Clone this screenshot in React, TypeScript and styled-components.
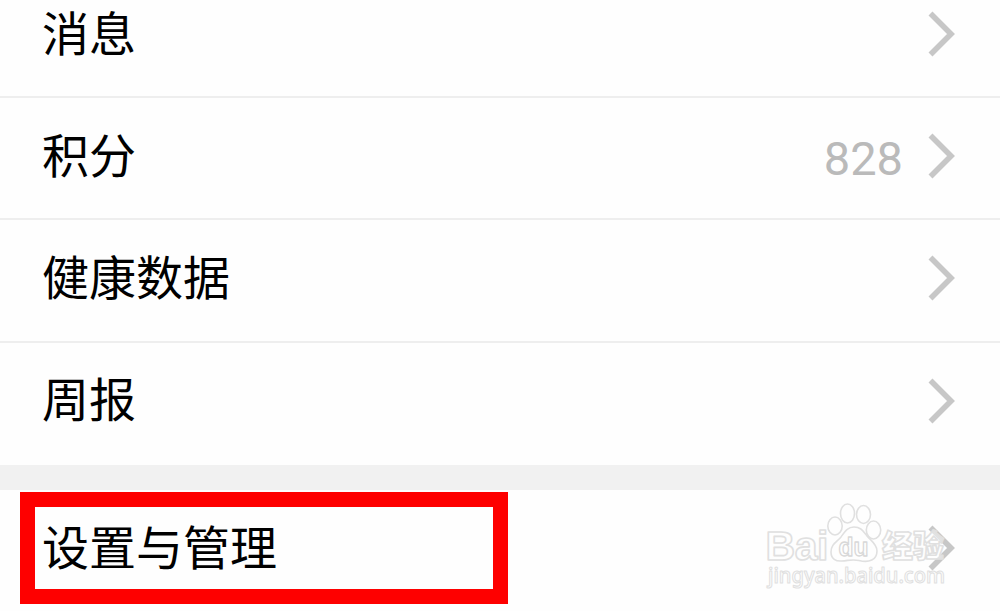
import { createGlobalStyle, styled } from 'styled-components';

const GlobalStyle = createGlobalStyle`
  body {
    margin: 0;
    background-color: #fefefe;
  }
`;

const Screen = styled.main`
  position: relative;
  width: 1000px;
  height: 611px;
  overflow: hidden;
  background-color: #fefefe;
  font-family: Roboto, "Noto Sans CJK SC", sans-serif;
`;

const MenuGroup = styled.div`
  margin-top: -24px;
`;

const MenuRow = styled.div<{ $last?: boolean }>`
  display: flex;
  align-items: center;
  box-sizing: border-box;
  height: 122.2px;
  padding: 0 45px 4px 42px;
  border-bottom: 2px solid ${(props) => (props.$last ? 'transparent' : '#eeeeee')};
`;

const Label = styled.span`
  flex: 1;
  padding-bottom: 7px;
  font-family: "Noto Sans CJK SC", sans-serif;
  font-size: 47px;
  line-height: 70px;
  color: #000;
`;

const Value = styled.span`
  padding-top: 6px;
  margin-right: 25px;
  font-size: 47px;
  line-height: 60px;
  color: #bababa;
`;

const Divider = styled.div`
  height: 25px;
  background-color: #f1f1f1;
`;

const SettingsRow = styled(MenuRow)`
  height: 121px;
  padding-bottom: 3px;

  ${Label} {
    padding-bottom: 5px;
  }
`;

const Highlight = styled.div`
  position: absolute;
  left: 20px;
  top: 492px;
  box-sizing: border-box;
  width: 488px;
  height: 112px;
  border: 15px solid #fe0000;
`;

const Watermark = styled.svg`
  position: absolute;
  left: 750px;
  top: 490px;
`;

const Chevron = () => (
  <svg width="27" height="46" viewBox="0 0 27 46" fill="none">
    <path d="M2.5 2.5 L23 23 L2.5 43.5" stroke="#c7c7c7" strokeWidth="5.6" />
  </svg>
);

const items = [
  { title: '消息' },
  { title: '积分', value: '828' },
  { title: '健康数据' },
  { title: '周报' },
];

const BaiduMark = () => (
  <Watermark width="250" height="121" viewBox="0 0 250 121">
    <g
      fill="#fefefe"
      fillOpacity="0.5"
      stroke="#e0e0e0"
      strokeWidth="1.6"
      strokeLinejoin="round"
      fontFamily='"Liberation Sans", "Noto Sans CJK SC", sans-serif'
      fontWeight="700"
    >
      <text x="15.5" y="69.5" fontSize="41" textLength="63">Bai</text>
      <ellipse cx="85" cy="36" rx="7.2" ry="9" />
      <ellipse cx="97.5" cy="23.5" rx="7" ry="9.5" />
      <ellipse cx="113.5" cy="24.5" rx="7" ry="9" />
      <ellipse cx="123.5" cy="40" rx="7.2" ry="9" />
      <path d="M104 37 C97 37 94 43 91 47 C87 52 81 54 81 62 C81 69 86 71.5 92 71 C99 70.5 102 69 109 70.5 C119 73 127 70 127 61 C127 54 121 51 117 46 C113 41 111 37 104 37 Z" />
      <text x="88.5" y="65.5" fontSize="25.5" textLength="30" lengthAdjust="spacingAndGlyphs" stroke="#d8d8d8" strokeWidth="1.3">du</text>
      <text x="132" y="67" fontSize="31" textLength="62" fontFamily='"Noto Sans CJK SC", sans-serif' fontWeight="900">经验</text>
      <text x="18" y="93" fontSize="22" textLength="177" lengthAdjust="spacingAndGlyphs" fontFamily='"Noto Sans", sans-serif' fontWeight="500" strokeWidth="1.1">jingyan.baidu.com</text>
    </g>
  </Watermark>
);

const App = () => (
  <>
    <GlobalStyle />
    <Screen>
      <MenuGroup>
        {items.map((item, i) => (
          <MenuRow key={item.title} $last={i === items.length - 1}>
            <Label>{item.title}</Label>
            {item.value && <Value>{item.value}</Value>}
            <Chevron />
          </MenuRow>
        ))}
      </MenuGroup>
      <Divider />
      <SettingsRow $last>
        <Label>设置与管理</Label>
        <Chevron />
      </SettingsRow>
      <Highlight />
      <BaiduMark />
    </Screen>
  </>
);

export default App;
